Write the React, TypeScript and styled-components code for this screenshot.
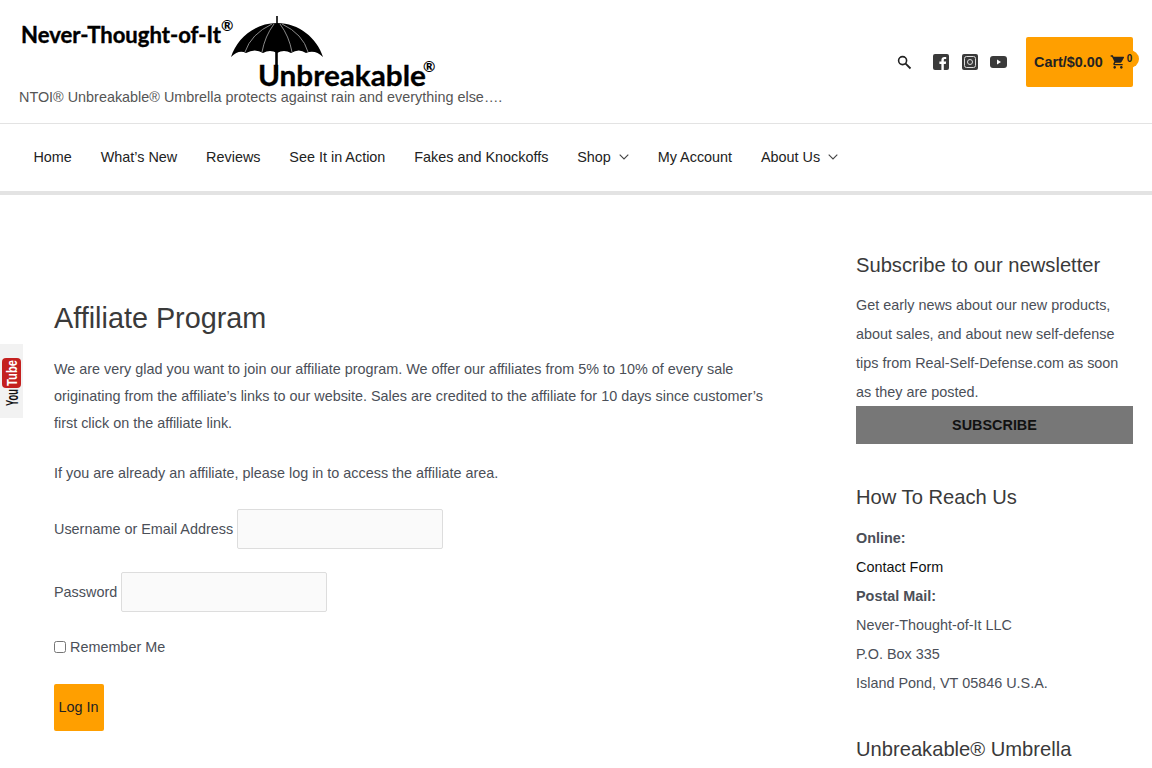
import React from 'react'
import styled, { createGlobalStyle } from 'styled-components'
import { MdShoppingCart } from 'react-icons/md'

const GlobalStyle = createGlobalStyle`
  html, body {
    margin: 0;
    height: 768px;
    overflow: hidden;
    background: #fff;
    font-family: "Liberation Sans", Arial, sans-serif;
    font-size: 14.4px;
    color: #4b4f58;
  }
  * { box-sizing: border-box; }
`

const TopBar = styled.header`
  display: flex;
  justify-content: space-between;
  align-items: flex-start;
  height: 124px;
  padding: 14px 19px 0;
  border-bottom: 1px solid #e3e3e3;
`
const Brand = styled.div`
  display: flex;
  flex-direction: column;
`
const Tagline = styled.div`
  margin-top: -7px;
  line-height: 20px;
  color: #555;
`
const Tools = styled.div`
  display: flex;
  align-items: center;
  padding-top: 23px;
`
const IconLink = styled.a<{ $gap?: number }>`
  display: flex;
  margin-left: ${({ $gap }) => $gap ?? 12}px;
  color: #3a3a3a;
`
const CartButton = styled.a`
  position: relative;
  display: flex;
  align-items: center;
  width: 107px;
  height: 50px;
  margin-left: 19px;
  padding-left: 8px;
  border-radius: 2px;
  background: #ff9f00;
  color: #222;
  font-weight: 700;
  line-height: 20px;
`
const CartIcon = styled.span`
  position: relative;
  z-index: 1;
  display: flex;
  margin-left: 7px;
  font-size: 16px;
`
const CartCount = styled.span`
  position: absolute;
  top: 13px;
  right: -6px;
  width: 19px;
  height: 18px;
  border-radius: 50%;
  background: #ff9f00;
  color: #222;
  font-size: 10px;
  line-height: 18px;
  text-align: center;
`

const Nav = styled.nav`
  display: flex;
  align-items: center;
  height: 71px;
  padding: 0 0 2px 19px;
  border-bottom: 4px solid #e3e3e3;
`
const NavItem = styled.a`
  display: flex;
  align-items: center;
  padding: 0 14.45px;
  color: #222;
  line-height: 20px;
  white-space: nowrap;
`
const Caret = styled.svg`
  margin-left: 8px;
`

const Page = styled.main`
  display: grid;
  grid-template-columns: 856px 277px;
  padding-top: 55px;
`
const Article = styled.article`
  padding: 50px 90px 0 54px;
`
const Title = styled.h1`
  margin: 0 0 20px;
  font-size: 28.8px;
  font-weight: 400;
  line-height: 36px;
  color: #3a3a3a;
`
const Para = styled.p`
  margin: 0 0 23px;
  line-height: 27px;
`
const FormRow = styled.div<{ $h: number; $top?: number }>`
  display: flex;
  align-items: center;
  height: ${({ $h }) => $h}px;
  margin-top: ${({ $top }) => $top ?? 0}px;
`
const TextBox = styled.input`
  width: 206px;
  height: 40px;
  margin-left: 4px;
  border: 1px solid #ddd;
  border-radius: 2px;
  background: #fafafa;
`
const Check = styled.input`
  width: 12px;
  height: 12px;
  margin: 0 4px 0 0;
`
const Submit = styled.button`
  display: block;
  width: 50px;
  height: 47px;
  margin-top: 27px;
  padding: 0 1px 2px 0;
  border: 0;
  border-radius: 2px;
  background: #ff9f00;
  color: #222;
  font: 14.4px "Liberation Sans", Arial, sans-serif;
`

const Sidebar = styled.aside`
  display: flex;
  flex-direction: column;
  padding-top: 1px;
`
const WidgetTitle = styled.h2`
  margin: 0;
  font-size: 20.16px;
  font-weight: 400;
  line-height: 28px;
  color: #3a3a3a;
`
const WidgetText = styled.p`
  margin: 12px 0 -1px;
  line-height: 29px;
`
const SubscribeBtn = styled.button`
  display: block;
  width: 277px;
  height: 38px;
  border: 0;
  background: #777;
  color: #111;
  font: 700 14.4px "Liberation Sans", Arial, sans-serif;
`
const ContactList = styled.div`
  margin: 12.5px 0 37.5px;
  line-height: 29px;
`
const ContactLine = styled.div<{ $strong?: boolean; $link?: boolean }>`
  font-weight: ${({ $strong }) => ($strong ? 700 : 400)};
  color: ${({ $link }) => ($link ? '#111' : 'inherit')};
`
const SpacedTitle = styled(WidgetTitle)`
  margin-top: 39px;
`

const YouTubeTab = styled.a`
  position: fixed;
  left: 0;
  top: 344px;
  display: flex;
  width: 23px;
  height: 74px;
  padding-left: 2px;
  background: #f2f2f2;
`

const Logo = () => (
  <svg width="420" height="80" viewBox="0 0 420 80" style={{ display: 'block' }}>
    <text x="2" y="29" fontFamily="Lato, sans-serif" fontWeight="700" fontSize="23" fill="#000" stroke="#000" strokeWidth="0.4" textLength="200" lengthAdjust="spacingAndGlyphs">Never-Thought-of-It</text>
    <text x="202" y="17" fontFamily="Lato, sans-serif" fontWeight="700" fontSize="15" fill="#000">®</text>
    <path d="M258 2V9" stroke="#000" strokeWidth="1.6" />
    <path d="M212 43C218 24 236 9 258 9C280 9 298 24 304 43Q296 35 287 39Q280 34 272 39Q265 35 258 39Q251 35 244 39Q236 34 227 39Q220 35 212 43Z" fill="#000" />
    <path d="M253 10Q232 20 226 38M255 10Q246 22 243 38M261 10Q270 22 273 38M263 10Q284 20 289 38" fill="none" stroke="#999" strokeWidth="0.9" />
    <path d="M257.500 38V62" stroke="#000" strokeWidth="2.600" />
    <text x="239" y="72" fontFamily="Lato, sans-serif" fontWeight="700" fontSize="29" fill="#000" stroke="#000" strokeWidth="0.3" textLength="168" lengthAdjust="spacingAndGlyphs">Unbreakable</text>
    <text x="404" y="58" fontFamily="Lato, sans-serif" fontWeight="700" fontSize="15" fill="#000">®</text>
  </svg>
)

const YouTubeMark = () => (
  <svg width="19" height="74" viewBox="0 0 19 74" style={{ display: 'block' }}>
    <rect x="0" y="14" width="19" height="30" rx="4" fill="#c4201f" />
    <text transform="translate(15 42) rotate(-90)" fontFamily="Liberation Sans, sans-serif" fontWeight="700" fontSize="15" fill="#fff" textLength="26" lengthAdjust="spacingAndGlyphs">Tube</text>
    <text transform="translate(16 62) rotate(-90)" fontFamily="Liberation Sans, sans-serif" fontWeight="700" fontSize="17" fill="#111" textLength="17" lengthAdjust="spacingAndGlyphs">You</text>
  </svg>
)

const Chevron = () => (
  <Caret width="10" height="6" viewBox="0 0 10 6">
    <path d="M.7.7 5 5l4.3-4.3" fill="none" stroke="#444" strokeWidth="1.1" />
  </Caret>
)

export default function App() {
  return (
    <>
      <GlobalStyle />
      <TopBar>
        <Brand>
          <Logo />
          <Tagline>NTOI® Unbreakable® Umbrella protects against rain and everything else….</Tagline>
        </Brand>
        <Tools>
          <IconLink>
            <svg width="15" height="15" viewBox="0 0 15 15">
              <circle cx="5.600" cy="5.600" r="4" fill="none" stroke="#222" strokeWidth="1.6" />
              <path d="M8.600 8.600 13.500 13.500" stroke="#222" strokeWidth="1.8" />
            </svg>
          </IconLink>
          <IconLink $gap={21}>
            <svg width="16" height="16" viewBox="0 0 16 16">
              <rect width="16" height="16" rx="2" fill="#3a3a3a" />
              <path d="M10.800 16v-6h2l.3-2.400h-2.300V6.200c0-.7.3-1.100 1.100-1.100h1.300V3c-.4 0-1-.1-1.800-.1-1.800 0-3 1.100-3 3.100v1.600H6.400V10h2v6z" fill="#fff" />
            </svg>
          </IconLink>
          <IconLink $gap={13}>
            <svg width="16" height="16" viewBox="0 0 16 16">
              <rect width="16" height="16" rx="2" fill="#3a3a3a" />
              <rect x="2.500" y="2.500" width="11" height="11" rx="2" fill="none" stroke="#ddd" strokeWidth="1" />
              <circle cx="8" cy="8" r="2.500" fill="none" stroke="#ddd" strokeWidth="1" />
            </svg>
          </IconLink>
          <IconLink $gap={12}>
            <svg width="17" height="12" viewBox="0 0 17 12">
              <rect width="17" height="12" rx="3" fill="#3a3a3a" />
              <path d="M7 3.500v5l4-2.500z" fill="#fff" />
            </svg>
          </IconLink>
          <CartButton>
            Cart/$0.00
            <CartCount>0</CartCount>
            <CartIcon><MdShoppingCart /></CartIcon>
          </CartButton>
        </Tools>
      </TopBar>
      <Nav>
        <NavItem>Home</NavItem>
        <NavItem>What’s New</NavItem>
        <NavItem>Reviews</NavItem>
        <NavItem>See It in Action</NavItem>
        <NavItem>Fakes and Knockoffs</NavItem>
        <NavItem>Shop<Chevron /></NavItem>
        <NavItem>My Account</NavItem>
        <NavItem>About Us<Chevron /></NavItem>
      </Nav>
      <Page>
        <Article>
          <Title>Affiliate Program</Title>
          <Para>We are very glad you want to join our affiliate program. We offer our affiliates from 5% to 10% of every sale originating from the affiliate’s links to our website. Sales are credited to the affiliate for 10 days since customer’s first click on the affiliate link.</Para>
          <Para>If you are already an affiliate, please log in to access the affiliate area.</Para>
          <FormRow $h={40} $top={-1}>Username or Email Address<TextBox type="text" /></FormRow>
          <FormRow $h={40} $top={23}>Password<TextBox type="password" /></FormRow>
          <FormRow $h={20} $top={25}><Check type="checkbox" />Remember Me</FormRow>
          <Submit>Log In</Submit>
        </Article>
        <Sidebar>
          <WidgetTitle>Subscribe to our newsletter</WidgetTitle>
          <WidgetText>Get early news about our new products, about sales, and about new self-defense tips from Real-Self-Defense.com as soon as they are posted.</WidgetText>
          <SubscribeBtn>SUBSCRIBE</SubscribeBtn>
          <SpacedTitle>How To Reach Us</SpacedTitle>
          <ContactList>
            <ContactLine $strong>Online:</ContactLine>
            <ContactLine $link>Contact Form</ContactLine>
            <ContactLine $strong>Postal Mail:</ContactLine>
            <ContactLine>Never-Thought-of-It LLC</ContactLine>
            <ContactLine>P.O. Box 335</ContactLine>
            <ContactLine>Island Pond, VT 05846 U.S.A.</ContactLine>
          </ContactList>
          <WidgetTitle>Unbreakable® Umbrella Reviews</WidgetTitle>
        </Sidebar>
      </Page>
      <YouTubeTab>
        <YouTubeMark />
      </YouTubeTab>
    </>
  )
}
